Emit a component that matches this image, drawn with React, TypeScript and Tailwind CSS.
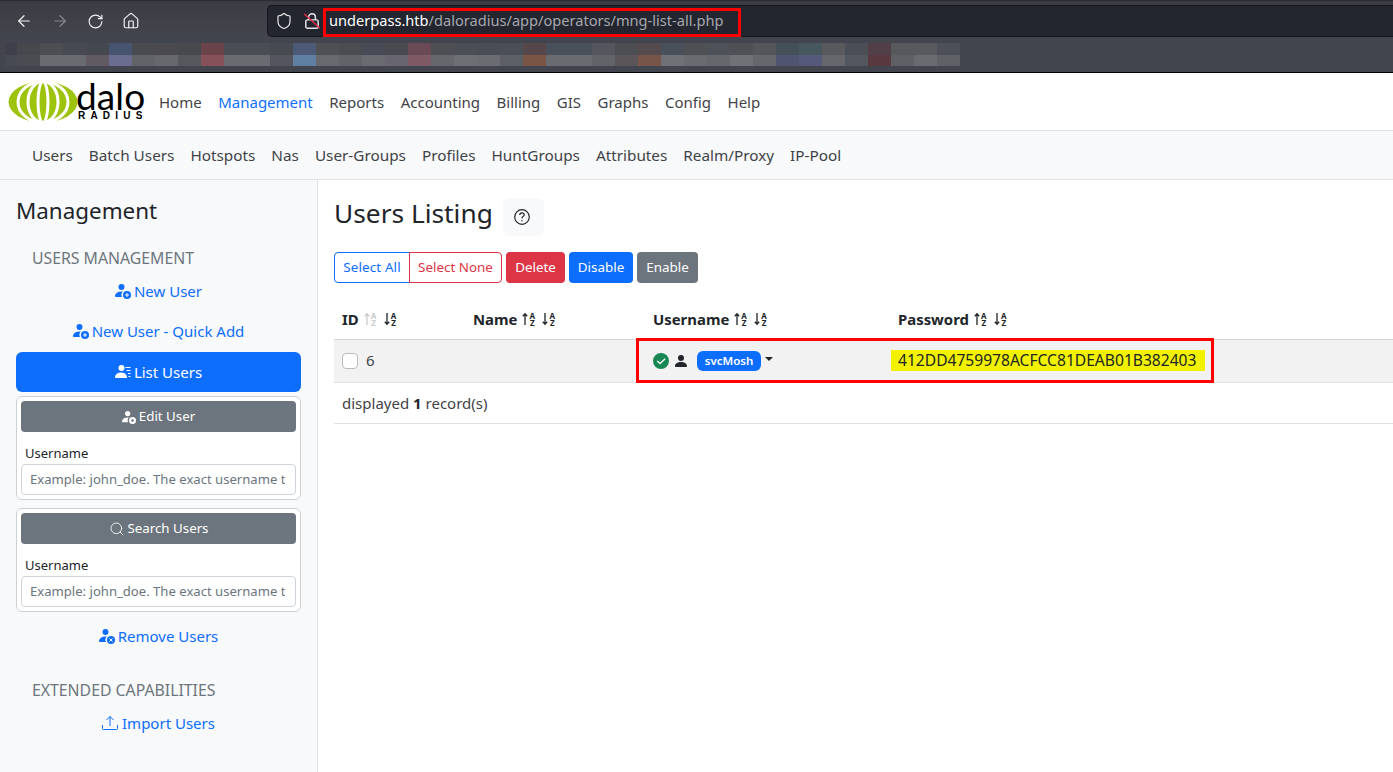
import React from "react";
import { ArrowLeft, ArrowRight, RotateCw, House, Shield, Search } from "lucide-react";

const sans = { fontFamily: '"Noto Sans", sans-serif' };

const top = ["#3f404b","#47484e","#4d4e52","#474a52","#46484f","#475470","#4a4b51","#4a4a50","#48494f","#6a444a","#4a4d54","#4a4d54","#484a52","#4d5a75","#4e5056","#4b4d52","#474c56","#4a4b50","#6a4a55","#4d4f54","#4a4e55","#494d55","#4a4e56","#55474a","#495059","#495059","#55555d","#4d4e52","#534b4d","#495059","#4f5054","#4d5158","#4f5055","#55565a","#445058","#46585e","#58595d","#4a4e56","#523f47","#58595d","#58595d","#4d5058"];
const bottom = ["#464a53","#4b4c51","#6a6b70","#6a6b70","#625a62","#6a6c90","#626368","#67686d","#57585e","#875159","#6a6b70","#6a6b70","#55555f","#5f7fa3","#68696e","#626368","#6a6b70","#696570","#7d5a64","#66676c","#6e6f74","#6b6c71","#5d5f66","#7a5545","#6a6b70","#6a6b70","#626368","#5a5558","#775548","#707176","#6a6b70","#66676c","#707176","#66676c","#4f5570","#565a7a","#66676c","#535760","#5a3840","#5f6065","#6a6b70","#606166"];

function UserIcon({ kind, small }: { kind: "plus" | "x" | "list" | "gear"; small?: boolean }) {
  return (
    <svg viewBox="0 0 16 16" className={`${small ? "h-[14px] w-[14px]" : "h-4 w-4"} shrink-0`} fill="currentColor">
      <path d="M8 7a3 3 0 1 0 0-6 3 3 0 0 0 0 6Z" transform="translate(-1.5 0)" />
      {kind === "list" ? (
        <>
          <path d="M0 13c0-1 1-4.500 6-4.500s6 3.500 6 4.500c0 .6-.5 1-1 1H1c-.5 0-1-.4-1-1Z" />
          <path d="M10.500 3h5v1h-5zM11.500 6h4v1h-4zM13 9h2.500v1H13zM13.500 12h2v1h-2z" />
        </>
      ) : (
        <>
          <path d="M1 14s-1 0-1-1 1-4.500 6.500-4.500c.5 0 1 0 1.400.1A4.500 4.500 0 0 0 7 14H1Z" />
          <circle cx="12" cy="12" r="4" />
          {kind === "plus" && <path d="M11.500 10h1v1.500H14v1h-1.500V14h-1v-1.500H10v-1h1.500z" fill="#f8f9fa" />}
          {kind === "x" && <path d="M10.400 10.400 13.600 13.600M13.600 10.400 10.400 13.600" stroke="#f8f9fa" strokeWidth="1" />}
          {kind === "gear" && <circle cx="12" cy="12" r="1.400" fill="#6c757d" />}
        </>
      )}
    </svg>
  );
}

function AZ() {
  return (
    <span className="flex flex-col items-center text-[8px] font-bold leading-[7px]" style={sans}>
      <span>A</span>
      <span>Z</span>
    </span>
  );
}

function SortUp({ faded }: { faded?: boolean }) {
  return (
    <span className={`inline-flex w-[14px] items-center gap-[1px] ${faded ? "text-[#c9cbce]" : "text-[#212529]"}`}>
      <svg viewBox="0 0 6 14" className="h-[14px] w-[6px]" fill="none" stroke="currentColor" strokeWidth="1.300">
        <path d="M3 13V2M.8 4.200 3 1.800l2.200 2.400" />
      </svg>
      <AZ />
    </span>
  );
}

function SortDown() {
  return (
    <span className="inline-flex w-[14px] items-center gap-[1px] text-[#212529]">
      <svg viewBox="0 0 6 14" className="h-[14px] w-[6px]" fill="none" stroke="currentColor" strokeWidth="1.300">
        <path d="M3 1v11M.8 9.800 3 12.200l2.200-2.400" />
      </svg>
      <AZ />
    </span>
  );
}

function Th({ label, w, faded }: { label: string; w: string; faded?: boolean }) {
  return (
    <div className={`${w} flex items-center px-2 text-[14.900px] font-bold text-[#212529]`}>
      <span>{label}</span>
      <span className="ml-[5px] flex items-center gap-[6px]">
        <SortUp faded={faded} />
        <SortDown />
      </span>
    </div>
  );
}

function Card({ title, icon }: { title: string; icon: React.ReactNode }) {
  return (
    <div className="rounded-md border border-[#ced0d2] bg-white p-1">
      <div className="flex h-[31px] items-center justify-center gap-[3px] rounded bg-[#6c757d] pt-[1px] text-[13.300px] text-white">
        {icon}
        {title}
      </div>
      <div className="mt-[11px] h-[20px] px-1 text-[13px] leading-[21px] text-[#212529]">Username</div>
      <div className="mt-[1px] flex h-[31px] items-center rounded border border-[#ced4da] bg-white px-2 pt-[1px] text-[13.100px] text-[#6c757d]">
        <span className="overflow-hidden whitespace-nowrap">Example: john_doe. The exact username t</span>
      </div>
    </div>
  );
}

function Logo() {
  return (
    <div className="relative h-[42px] w-[135px] shrink-0">
      <svg viewBox="0 0 70 42" className="absolute left-0 top-0 h-[42px] w-[70px]">
        <ellipse cx="35" cy="21" rx="34.500" ry="20.500" fill="#9dc30f" />
        <g fill="none" stroke="#fff" strokeWidth="3">
          <ellipse cx="35" cy="21" rx="5" ry="20.500" />
          <ellipse cx="35" cy="21" rx="15" ry="20.500" />
          <ellipse cx="35" cy="21" rx="25" ry="20.500" />
        </g>
      </svg>
      <span className="absolute left-[68px] top-[-7px] text-[37px] leading-[44px] tracking-[0.1px] text-black" style={{ fontFamily: "Lato, sans-serif", fontWeight: 400 }}>dalo</span>
      <span className="absolute left-[70px] top-[29px] text-[10px] font-bold leading-[12px] tracking-[5.200px] text-black" style={{ fontFamily: '"Liberation Sans", sans-serif' }}>RADIUS</span>
    </div>
  );
}

const linkRow = "flex h-[24px] items-center justify-center gap-[3px] text-[15px] text-[#0d6efd]";

export default function App() {
  return (
    <div className="relative h-[772px] w-[1393px] overflow-hidden bg-white text-base" style={sans}>
      {/* browser chrome */}
      <div className="h-[73px] border-b border-black bg-[#43454e]">
        <div className="flex h-[38px] border-t border-[#2b2b30] bg-gradient-to-b from-[#3b3c43] to-[#43454e] pt-[4px]">
          <div className="flex h-[32px] w-[267px] items-center pl-[15px]">
            <ArrowLeft size={18} strokeWidth={1.600} className="text-[#f2f2f3]" />
            <ArrowRight size={18} strokeWidth={1.600} className="ml-[18px] text-[#85868b]" />
            <RotateCw size={17} strokeWidth={1.600} className="ml-[18px] text-[#f2f2f3]" />
            <House size={18} strokeWidth={1.600} className="ml-[18px] text-[#f2f2f3]" />
          </div>
          <div className="flex h-[32px] flex-1 items-center rounded-l-[5px] border-y border-l border-[#16171c] bg-[#23252f] pl-[7px] text-[14.600px] text-[#a6a7ad]">
            <Shield size={18} strokeWidth={1.600} className="text-[#e6e6e8]" />
            <svg viewBox="0 0 16 16" className="ml-[10px] h-[18px] w-[18px]" fill="none" stroke="#e6e6e8" strokeWidth="1.300">
              <rect x="2.500" y="7" width="11" height="7.500" rx="1.500" />
              <path d="M5 7V4.500a3 3 0 0 1 6 0V7" />
              <path d="M1 1.500 15 14.500" stroke="#e02b4a" />
            </svg>
            <span className="ml-[8px] whitespace-nowrap"><span className="text-white">underpass.htb</span>/daloradius/app/operators/mng-list-all.php</span>
          </div>
        </div>
        <div className="pl-[5px] pt-[5px]">
          <div className="flex h-[12px]">
            {top.map((c, i) => (
              <div key={i} className={i === 0 ? "w-[12px]" : "w-[23px]"} style={{ background: c }} />
            ))}
          </div>
          <div className="flex h-[11px]">
            {bottom.map((c, i) => (
              <div key={i} className={i === 0 ? "w-[12px]" : "w-[23px]"} style={{ background: c }} />
            ))}
          </div>
        </div>
      </div>

      {/* main nav */}
      <div className="flex h-[57px] items-center bg-white pl-[8px] text-[#212529]">
        <Logo />
        <nav className="ml-[16px] flex gap-[16.500px] text-[15px] leading-[24px] text-[#3f4347]">
          <span>Home</span>
          <span className="text-[#0d6efd]">Management</span>
          <span>Reports</span>
          <span>Accounting</span>
          <span>Billing</span>
          <span>GIS</span>
          <span>Graphs</span>
          <span>Config</span>
          <span>Help</span>
        </nav>
      </div>

      {/* sub nav */}
      <div className="flex h-[50px] items-center gap-4 border-y border-[#dfe1e3] bg-[#f8f9fa] pl-[32px] text-[15.300px] text-[#3f4347]">
        <span>Users</span>
        <span>Batch Users</span>
        <span>Hotspots</span>
        <span>Nas</span>
        <span>User-Groups</span>
        <span>Profiles</span>
        <span>HuntGroups</span>
        <span>Attributes</span>
        <span>Realm/Proxy</span>
        <span>IP-Pool</span>
      </div>

      <div className="flex h-[592px]">
        {/* sidebar */}
        <aside className="w-[318px] shrink-0 border-r border-[#dfe1e3] bg-[#f8f9fa] px-4">
          <h4 className="mt-[13px] h-[36px] text-[22.400px] leading-[36px] text-[#212529]">Management</h4>
          <div className="mt-[17px] pl-4 text-[15.800px] leading-[24px] text-[#6c757d]">USERS MANAGEMENT</div>
          <div className={`mt-[9px] ${linkRow}`}><UserIcon kind="plus" />New User</div>
          <div className={`mt-[16px] ${linkRow}`}><UserIcon kind="plus" />New User - Quick Add</div>
          <div className="mt-[9px] flex h-[40px] items-center justify-center gap-[3px] rounded-md bg-[#0d6efd] text-[15px] text-white"><UserIcon kind="list" />List Users</div>
          <div className="mt-[4px]">
            <Card title="Edit User" icon={<UserIcon kind="gear" small />} />
          </div>
          <div className="mt-[8px]">
            <Card title="Search Users" icon={<Search size={16} strokeWidth={1.300} />} />
          </div>
          <div className={`mt-[12px] ${linkRow}`}><UserIcon kind="x" />Remove Users</div>
          <div className="mt-[30px] pl-4 text-[15.800px] leading-[24px] text-[#6c757d]">EXTENDED CAPABILITIES</div>
          <div className={`mt-[9px] ${linkRow} gap-[4px]`}>
            <svg viewBox="0 0 16 16" className="h-4 w-4" fill="none" stroke="currentColor" strokeWidth="1">
              <path d="M.5 10v3.500a1 1 0 0 0 1 1h13a1 1 0 0 0 1-1V10M8 11V1.500M4.500 5 8 1.500 11.500 5" />
            </svg>
            Import Users
          </div>
        </aside>

        {/* content */}
        <main className="min-w-0 flex-1 pl-4">
          <div className="mt-[18px] flex h-[38px] items-start">
            <h2 className="-mt-[1px] text-[26.300px] leading-[33px] text-[#212529]">Users Listing</h2>
            <div className="ml-[10px] flex h-[38px] w-[41px] items-center justify-center rounded-md bg-[#f8f9fa] pr-[3px]">
              <svg viewBox="0 0 16 16" className="h-4 w-4" fill="none" stroke="#212529" strokeWidth="1.200">
                <circle cx="8" cy="8" r="7.300" />
                <path d="M5.700 6c.1-1.400 1-2.100 2.300-2.100s2.200.8 2.200 1.900c0 1-.6 1.400-1.200 1.800-.6.400-1 .8-1 1.600v.4" />
                <circle cx="8" cy="11.700" r=".7" fill="#212529" stroke="none" />
              </svg>
            </div>
          </div>

          <div className="mt-[16px] flex h-[31px] text-[13.400px]">
            <div className="flex">
              <div className="flex w-[76px] items-center justify-center rounded-l border border-[#0d6efd] tracking-[0.15px] text-[#0d6efd]">Select All</div>
              <div className="-ml-[1px] flex w-[93px] items-center justify-center rounded-r border border-[#dc3545] text-[#dc3545]">Select None</div>
            </div>
            <div className="ml-[4px] flex w-[59px] items-center justify-center rounded bg-[#dc3545] text-white">Delete</div>
            <div className="ml-[4px] flex w-[64px] items-center justify-center rounded bg-[#0d6efd] text-white">Disable</div>
            <div className="ml-[4px] flex w-[61px] items-center justify-center rounded bg-[#6c757d] text-white">Enable</div>
          </div>

          <div className="mt-[17px] w-[1059px]">
            <div className="flex h-[40px] items-center border-b border-[#d5d7d9] pb-[1px]">
              <Th label="ID" w="w-[131px]" faded />
              <Th label="Name" w="w-[180px]" />
              <Th label="Username" w="w-[245px]" />
              <Th label="Password" w="flex-1" />
            </div>
            <div className="flex h-[43px] items-center border-b border-[#dee2e6] bg-[#f2f2f2] text-[#3f4347]">
              <div className="flex w-[311px] items-center px-2">
                <span className="h-4 w-4 rounded border border-[#b9bbbd] bg-white" />
                <span className="-mt-[2px] ml-[8px] text-[15px]">6</span>
              </div>
              <div className="flex w-[245px] items-center px-2">
                <svg viewBox="0 0 16 16" className="h-4 w-4" fill="#198754">
                  <path fillRule="evenodd" d="M8 0a8 8 0 1 1 0 16A8 8 0 0 1 8 0Zm3.700 5.300L7 9.500 4.700 7.400l-1 1L7 11.500l5.700-5.200-1-1Z" />
                </svg>
                <svg viewBox="0 0 16 16" className="ml-[4px] h-4 w-4" fill="#212529">
                  <path d="M8 8a3 3 0 1 0 0-6 3 3 0 0 0 0 6ZM3 14c-.6 0-1-.4-1-1 0-1.500 1.500-4 6-4s6 2.500 6 4c0 .6-.4 1-1 1H3Z" />
                </svg>
                <span className="ml-[8px] flex h-[20px] w-[64px] items-center justify-center rounded-md bg-[#0d6efd] text-[11.500px] font-semibold text-white">svcMosh</span>
                <span className="ml-[4px] mt-[-4px] h-0 w-0 border-x-4 border-t-4 border-x-transparent border-t-[#212529]" />
              </div>
              <div className="flex-1 px-2 text-[15.600px] text-[#212529]">
                <span className="-ml-[7px] -mt-[1px] flex h-[21px] w-[314px] items-center bg-[#f2f200] pl-[7px]">412DD4759978ACFCC81DEAB01B382403</span>
              </div>
            </div>
            <div className="flex h-[41px] items-center border-b border-[#dee2e6] px-2 text-[15px] text-[#3f4347]">
              displayed&nbsp;<b className="font-bold text-[#212529]">1</b>&nbsp;record(s)
            </div>
          </div>
        </main>
      </div>

      {/* screenshot annotations */}
      <div className="pointer-events-none absolute left-[323px] top-[8px] h-[29px] w-[418px] border-[3px] border-[#ff0000]" />
      <div className="pointer-events-none absolute left-[636px] top-[338px] h-[45px] w-[578px] border-[3px] border-[#ff0000]" />
    </div>
  );
}
